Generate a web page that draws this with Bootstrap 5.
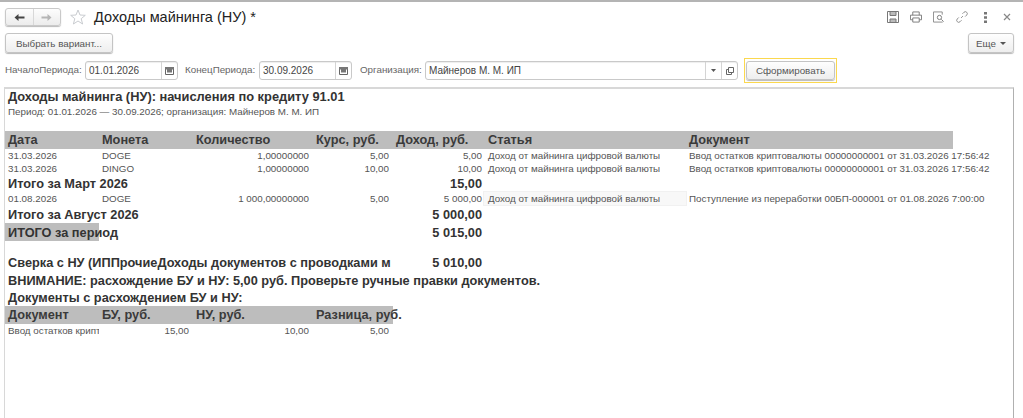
<!DOCTYPE html>
<html lang="ru">
<head>
<meta charset="UTF-8">
<title>Доходы майнинга (НУ)</title>
<link href="https://cdn.jsdelivr.net/npm/bootstrap@5.3.0/dist/css/bootstrap.min.css" rel="stylesheet">
<style>
html, body { height: 100%; overflow: hidden; }
body { font-family: "Liberation Sans", Arial, sans-serif; font-size: 11px; color: #4b4b4b; background: #fff; border-top: 2px solid #b4b4b4; }
.head-row { height: 30px; padding: 0 12px 0 5px; }
.nav-pair { width: 56px; height: 18px; border: 1px solid #c9c9c9; border-radius: 3px; background: linear-gradient(#fdfdfd, #ececec); box-shadow: 0 1px 1px #bbb; }
.nav-pair > div { flex: 1; height: 100%; }
.nav-pair > div + div { border-left: 1px solid #d8d8d8; }
.doc-title { font-size: 14.5px; color: #222; line-height: 18px; margin-left: 8px; }
.star { margin-left: 9px; }
.tool-icons { gap: 11px; }
.tool-icons svg { display: block; }
.tool-icons .dots-ic { margin-left: 5px; }
.tool-icons .close-ic { margin-left: 5px; }
.btn-1c { font-size: 9.8px; line-height: 13px; color: #555; border: 1px solid #c4c4c4; border-radius: 3px; background: linear-gradient(#fefefe, #eeeeee); box-shadow: 0 1px 1px #b8b8b8; padding: 0; height: 20px; }
.btn-1c:hover { color: #555; border-color: #c4c4c4; }
.variant-row { height: 27px; padding: 1px 9px 0 5px; }
.btn-variant { width: 108px; }
.btn-more { width: 46px; }
.caret-down { display: inline-block; border: 3px solid transparent; border-top-color: #555; border-bottom: 0; vertical-align: middle; margin-left: 4px; }
.filter-row { height: 23px; padding-left: 5px; align-items: center; }
.filter-label { color: #666; font-size: 9.8px; white-space: nowrap; flex: none; }
.field-1c { height: 19px; border: 1px solid #c9c9c9; border-radius: 3px; background: #fff; box-shadow: inset 0 1px 1px #eee; color: #444; font-size: 10px; line-height: 17px; flex: none; }
.field-1c .field-val { flex: 1; padding-left: 3px; white-space: nowrap; overflow: hidden; }
.field-1c .field-btn { width: 16px; height: 100%; border-left: 1px solid #d4d4d4; display: flex; align-items: center; justify-content: center; }
.lbl-start { width: 76px; }
.lbl-end { width: 70px; margin-left: 7px; }
.lbl-org { width: 62px; margin-left: 8px; }
.f-date { width: 93px; margin-left: 4px; }
.f-org { width: 313px; margin-left: 3px; }
.gen-wrap { margin-left: 6px; border: 1px solid #fbd84e; padding: 2px 1px; height: 25px; width: 93px; flex: none; }
.gen-wrap .btn-1c { width: 89px; height: 19px; }
.report-box { height: 340px; margin: 5px 9px 0 4px; border-top: 2px solid #d8d8d8; border-left: 1px solid #d8d8d8; border-right: 1px solid #b0b0b0; overflow: hidden; }
.rep-title { font-weight: 700; font-size: 12.85px; color: #333; line-height: 16px; padding-left: 3px; height: 16px; white-space: nowrap; }
.rep-sub { font-size: 9.8px; color: #555; line-height: 14px; height: 26px; padding-left: 3px; }
table.rep-table { table-layout: fixed; border-collapse: collapse; width: 948px; }
table.rep-table.t-small { width: 388px; }
.rep-table td, .rep-table th { padding: 0 4px 0 3px; white-space: nowrap; overflow: visible; }
.rep-table tr.hdr th { background: #bdbdbd; font-weight: 700; font-size: 12.75px; color: #3a3a3a; height: 18px; line-height: 16px; }
.rep-table tr.rw td { font-size: 9.8px; color: #555; height: 13px; line-height: 13px; }
.rep-table tr.rw-c td { height: 15px; }
.rep-table tr.tot td { font-weight: 700; font-size: 12.75px; color: #333; line-height: 15px; }
.rep-table .num { text-align: right; }
.rep-table td.num-in, .rep-table th.num-in { padding-right: 1px; }
.rep-table td.art, .rep-table th.art { padding-left: 5px; }
.rep-table td.doc, .rep-table th.doc { padding-left: 2px; }
.rep-table td.cell-mark { background: #f8f8f8; box-shadow: inset 0 0 0 1px #f1f1f1; }
.rep-table tr.tot td.band { background: #bdbdbd; }
.rep-table tr.tot td.clip, .rep-table tr.rw td.clip { overflow: hidden; }
.h-16 { height: 16px; }
.h-17 { height: 17px; }
.h-18 { height: 18px; }
.h-12 { height: 12px; }
</style>
</head>
<body>
<div class="head-row d-flex align-items-center">
  <div class="nav-pair d-flex">
    <div class="d-flex align-items-center justify-content-center"><svg width="11" height="9" viewBox="0 0 11 9"><path d="M0.5 4.5 L4.500 1 V3.500 H10.500 V5.500 H4.500 V8 Z" fill="#444"/></svg></div>
    <div class="d-flex align-items-center justify-content-center"><svg width="11" height="9" viewBox="0 0 11 9"><path d="M10.500 4.500 L6.500 1 V3.500 H0.500 V5.500 H6.500 V8 Z" fill="#b5b5b5"/></svg></div>
  </div>
  <svg class="star" width="16" height="16" viewBox="0 0 16 16"><path d="M8 1 L10 6 L15.300 6.300 L11.200 9.700 L12.600 15 L8 12 L3.400 15 L4.800 9.700 L0.700 6.300 L6 6 Z" fill="#fff" stroke="#c9ccd0"/></svg>
  <div class="doc-title">Доходы майнинга (НУ) *</div>
  <div class="tool-icons d-flex align-items-center ms-auto">
    <svg width="12" height="12" viewBox="0 0 12 12"><path d="M.5.5h11v11H.5z" fill="none" stroke="#777"/><path d="M3 .5h6v4H3zM3 8h6v3.500H3z" fill="#bbb" stroke="#777"/></svg>
    <svg width="12" height="12" viewBox="0 0 13 12"><path d="M3 4V.5h7V4M3 9H.5V4h12v5H10M3 7h7v4.500H3z" fill="none" stroke="#777"/></svg>
    <svg width="12" height="12" viewBox="0 0 13 12"><path d="M10 3.500V.5H.5v11h10" fill="none" stroke="#888"/><circle cx="7" cy="6.500" r="2.300" fill="none" stroke="#777"/><path d="M9 8.500l2.500 2.500" stroke="#777"/></svg>
    <svg width="12" height="12" viewBox="0 0 13 13"><path d="M5.500 7.500l2-2M7 3l1.600-1.600a2.100 2.100 0 013 3L10 6M6 10l-1.600 1.600a2.100 2.100 0 01-3-3L3 7" fill="none" stroke="#888"/></svg>
    <svg class="dots-ic" width="3" height="11" viewBox="0 0 3 11"><path d="M0 0h3v2.400H0zM0 4.300h3v2.400H0zM0 8.600h3V11H0z" fill="#777"/></svg>
    <svg class="close-ic" width="8" height="8" viewBox="0 0 8 8"><path d="M1 1l6 6M7 1L1 7" stroke="#888" stroke-width="1.200"/></svg>
  </div>
</div>
<div class="variant-row d-flex justify-content-between align-items-start">
  <button type="button" class="btn btn-1c btn-variant">Выбрать вариант...</button>
  <button type="button" class="btn btn-1c btn-more">Еще<span class="caret-down"></span></button>
</div>
<div class="filter-row d-flex">
  <div class="filter-label lbl-start">НачалоПериода:</div>
  <div class="field-1c f-date d-flex"><div class="field-val">01.01.2026</div><div class="field-btn"><svg width="9" height="9" viewBox="0 0 9 9"><path d="M.5 1.500h8v7h-8z" fill="none" stroke="#666"/><path d="M0 1h9v2.500H0zM2 3.500h5v3H2z" fill="#777"/></svg></div></div>
  <div class="filter-label lbl-end">КонецПериода:</div>
  <div class="field-1c f-date d-flex"><div class="field-val">30.09.2026</div><div class="field-btn"><svg width="9" height="9" viewBox="0 0 9 9"><path d="M.5 1.500h8v7h-8z" fill="none" stroke="#666"/><path d="M0 1h9v2.500H0zM2 3.500h5v3H2z" fill="#777"/></svg></div></div>
  <div class="filter-label lbl-org">Организация:</div>
  <div class="field-1c f-org d-flex"><div class="field-val">Майнеров М. М. ИП</div><div class="field-btn"><svg width="5" height="3" viewBox="0 0 5 3"><path d="M0 0h5L2.500 3z" fill="#555"/></svg></div><div class="field-btn"><svg width="8" height="8" viewBox="0 0 8 8"><path d="M2.500.5h5v5h-5zM2.500 2.500H.5v5h5V5.500" fill="none" stroke="#666"/></svg></div></div>
  <div class="gen-wrap"><button type="button" class="btn btn-1c d-block">Сформировать</button></div>
</div>
<div class="report-box">
  <div class="rep-title">Доходы майнинга (НУ): начисления по кредиту 91.01</div>
  <div class="rep-sub">Период: 01.01.2026 — 30.09.2026; организация: Майнеров М. М. ИП</div>
  <table class="rep-table">
    <colgroup><col style="width:94px"><col style="width:94px"><col style="width:120px"><col style="width:80px"><col style="width:90px"><col style="width:204px"><col style="width:266px"></colgroup>
    <tr class="hdr"><th>Дата</th><th>Монета</th><th>Количество</th><th>Курс, руб.</th><th>Доход, руб.</th><th class="art">Статья</th><th class="doc">Документ</th></tr>
    <tr class="rw"><td>31.03.2026</td><td>DOGE</td><td class="num">1,00000000</td><td class="num">5,00</td><td class="num num-in">5,00</td><td class="art">Доход от майнинга цифровой валюты</td><td class="doc">Ввод остатков криптовалюты 00000000001 от 31.03.2026 17:56:42</td></tr>
    <tr class="rw"><td>31.03.2026</td><td>DINGO</td><td class="num">1,00000000</td><td class="num">10,00</td><td class="num num-in">10,00</td><td class="art">Доход от майнинга цифровой валюты</td><td class="doc">Ввод остатков криптовалюты 00000000001 от 31.03.2026 17:56:42</td></tr>
    <tr class="tot h-16"><td colspan="4">Итого за Март 2026</td><td class="num num-in">15,00</td><td></td><td></td></tr>
    <tr class="rw rw-c"><td>01.08.2026</td><td>DOGE</td><td class="num">1 000,00000000</td><td class="num">5,00</td><td class="num num-in">5 000,00</td><td class="art cell-mark">Доход от майнинга цифровой валюты</td><td class="doc">Поступление из переработки 00БП-000001 от 01.08.2026 7:00:00</td></tr>
    <tr class="tot h-17"><td colspan="4">Итого за Август 2026</td><td class="num num-in">5 000,00</td><td></td><td></td></tr>
    <tr class="tot h-18"><td class="band">ИТОГО за период</td><td></td><td></td><td></td><td class="num num-in">5 015,00</td><td></td><td></td></tr>
    <tr class="h-12"><td colspan="7"></td></tr>
    <tr class="tot h-18"><td colspan="4" class="clip">Сверка с НУ (ИППрочиеДоходы документов с проводками м</td><td class="num num-in">5 010,00</td><td></td><td></td></tr>
    <tr class="tot h-18"><td colspan="7">ВНИМАНИЕ: расхождение БУ и НУ: 5,00 руб. Проверьте ручные правки документов.</td></tr>
    <tr class="tot h-17"><td colspan="7">Документы с расхождением БУ и НУ:</td></tr>
  </table>
  <table class="rep-table t-small">
    <colgroup><col style="width:94px"><col style="width:94px"><col style="width:120px"><col style="width:80px"></colgroup>
    <tr class="hdr"><th>Документ</th><th>БУ, руб.</th><th>НУ, руб.</th><th>Разница, руб.</th></tr>
    <tr class="rw"><td class="clip">Ввод остатков крипт</td><td class="num">15,00</td><td class="num">10,00</td><td class="num">5,00</td></tr>
  </table>
</div>
<script src="https://cdn.jsdelivr.net/npm/bootstrap@5.3.0/dist/js/bootstrap.bundle.min.js"></script>
</body>
</html>
